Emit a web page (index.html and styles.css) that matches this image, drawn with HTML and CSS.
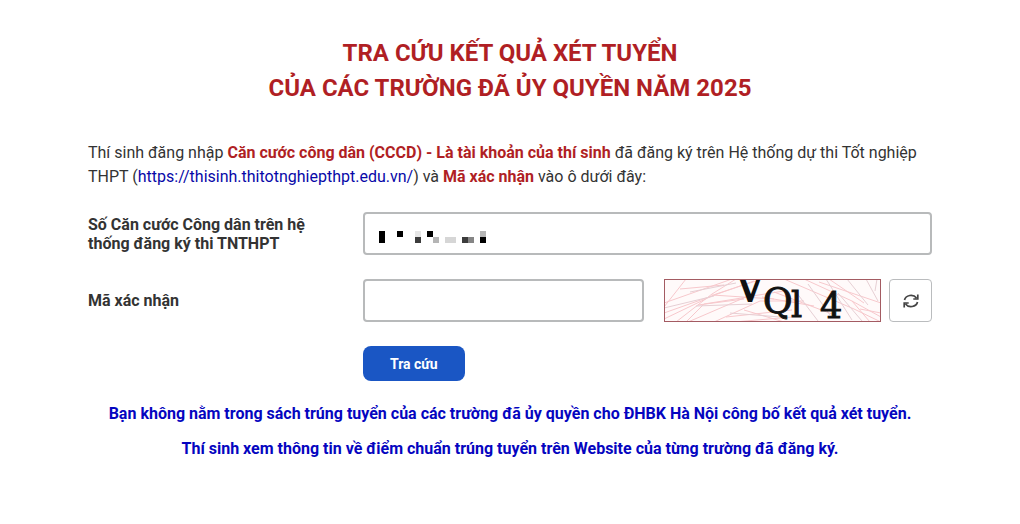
FILE: index.html
```html
<!DOCTYPE html>
<html lang="vi">
<head>
  <meta charset="UTF-8">
  <meta name="viewport" content="width=device-width, initial-scale=1.0">
  <title>Tra cứu kết quả xét tuyển</title>
  <link rel="stylesheet" href="styles.css">
</head>
<body>
  <main class="container">
    <h1>TRA CỨU KẾT QUẢ XÉT TUYỂN<br>CỦA CÁC TRƯỜNG ĐÃ ỦY QUYỀN NĂM 2025</h1>

    <p class="intro">Thí sinh đăng nhập <b>Căn cước công dân (CCCD) - Là tài khoản của thí sinh</b> đã đăng ký trên Hệ thống dự thi Tốt nghiệp THPT (<a href="https://thisinh.thitotnghiepthpt.edu.vn/">https://thisinh.thitotnghiepthpt.edu.vn/</a>) và <b>Mã xác nhận</b> vào ô dưới đây:</p>

    <form class="search-form">
      <label for="cccd">Số Căn cước Công dân trên hệ thống đăng ký thi TNTHPT</label>
      <div class="masked-field">
        <input type="text" id="cccd" name="cccd">
        <svg class="mask" width="108" height="12" viewBox="0 0 108 12" shape-rendering="crispEdges" aria-hidden="true">
          <path d="M0 0h6v12H0zM18 0h6v6h-6zM48 0h6v6h-6zM101 6h6v6h-6z" fill="#000"/>
          <path d="M36 6h6v6h-6zM83 6h6v6h-6z" fill="#3c3c3c"/>
          <path d="M89 6h6v6h-6z" fill="#858585"/>
          <path d="M54 6h6v6h-6zM101 0h6v6h-6z" fill="#b5b5b5"/>
          <path d="M66 6h11v6H66z" fill="#d6d6d6"/>
          <path d="M36 0h6v6h-6z" fill="#e6e6e6"/>
        </svg>
      </div>

      <label for="captcha">Mã xác nhận</label>
      <div class="captcha-row">
        <input type="text" id="captcha" name="captcha" autocomplete="off">
        <svg class="captcha" width="217" height="43" viewBox="0 0 217 43" role="img" aria-label="Captcha">
          <rect width="217" height="43" fill="#fffafa"/>
          <g fill="none" stroke="#f7c8cc">
            <path d="M0 28L22 0M0 24L68 0M0 34L90 2M0 40L52 15L98 0M12 43L48 15L72 0M22 43L40 25L90 17M34 26L80 20M24 43L82 18L120 12M50 43L96 22L140 22M70 43L128 38M16 10L60 6M48 16L110 20M80 31L120 43M62 38L128 31"/>
            <path d="M98 18L150 27M120 0L190 30L217 43M140 0L188 22L217 38M155 3L217 24M165 0L200 24M110 13L168 35M188 22L206 43M196 30L217 34"/>
          </g>
          <g fill="none" stroke="#e6cfd4">
            <path d="M0 29L50 17M26 13L72 4M32 27L88 25M66 34L116 38M144 5L166 36M162 0L188 41M183 0L204 26M202 0L214 22M132 13L154 42M174 14L198 42M213 0L211 12"/>
          </g>
          <g class="captcha-text">
            <text x="74" y="22" font-size="33" stroke-width="2">V</text>
            <text x="99" y="34" font-size="36">Q</text>
            <text x="127" y="38" font-size="35">l</text>
            <text x="156" y="39" font-size="35">4</text>
          </g>
          <rect x="0.5" y="0.5" width="216" height="42" fill="none" stroke="#a35b62"/>
        </svg>
        <button type="button" class="btn-refresh" aria-label="Đổi mã xác nhận">
          <svg width="16" height="16" viewBox="0 0 16 16" fill="none" stroke="#444" stroke-width="1.7" aria-hidden="true">
            <path d="M1.5 7A6.6 5.7 0 0 1 13.5 5M14.8 1.5V6H10.3M14.5 9A6.6 5.7 0 0 1 2.5 11M1.2 14.5V10H5.7"/>
          </svg>
        </button>
      </div>

      <button type="submit" class="btn-submit">Tra cứu</button>
    </form>

    <div class="result">
      <p>Bạn không nằm trong sách trúng tuyển của các trường đã ủy quyền cho ĐHBK Hà Nội công bố kết quả xét tuyển.</p>
      <p>Thí sinh xem thông tin về điểm chuẩn trúng tuyển trên Website của từng trường đã đăng ký.</p>
    </div>
  </main>
</body>
</html>
```
FILE: styles.css
```css
* {
  box-sizing: border-box;
}

body {
  margin: 0;
  background: #fff;
  color: #333;
  font-family: Roboto, sans-serif;
  font-size: 16px;
  line-height: 24px;
}

.container {
  max-width: 876px;
  margin: 0 auto;
  padding: 36px 16px;
}

h1 {
  margin: 0 0 35px;
  color: #b01f24;
  font-size: 24px;
  line-height: 35px;
  text-align: center;
}

.intro {
  margin: 0 0 23px;
}

.intro b {
  color: #b01f24;
}

.intro a {
  color: #0808a8;
  text-decoration: none;
}

.search-form {
  display: grid;
  grid-template-columns: 275px 1fr;
  row-gap: 24px;
  align-items: center;
}

label {
  padding-right: 48px;
  font-weight: bold;
  line-height: 19px;
}

input {
  width: 100%;
  height: 43px;
  padding: 0 16px;
  border: 2px solid #b8babb;
  border-radius: 4px;
  background: #fff;
  font: inherit;
}

.masked-field {
  position: relative;
  display: flex;
}

.mask {
  position: absolute;
  left: 16px;
  bottom: 12px;
}

.captcha-row {
  display: flex;
  gap: 8px;
}

.captcha-row input {
  flex: 1;
  min-width: 0;
  margin-right: 12px;
}

.captcha {
  flex: none;
}

.captcha-text {
  font-family: "DejaVu Serif", serif;
  fill: #111;
  stroke: #111;
  stroke-width: 1px;
}

.btn-refresh {
  display: flex;
  flex: none;
  align-items: center;
  justify-content: center;
  width: 43px;
  height: 43px;
  padding: 0;
  border: 1px solid #babcbe;
  border-radius: 4px;
  background: #fff;
}

.btn-submit {
  grid-column: 2;
  justify-self: start;
  height: 35px;
  padding: 0 27px;
  border: 0;
  border-radius: 8px;
  background: #1a56c4;
  color: #fff;
  font: bold 14px Roboto, sans-serif;
}

.result {
  margin-top: 21px;
  color: #0505c0;
  font-weight: bold;
  text-align: center;
}

.result p {
  margin: 0 0 11px;
}

@media (max-width: 700px) {
  .search-form {
    grid-template-columns: 1fr;
  }

  .btn-submit {
    grid-column: 1;
  }
}
```
